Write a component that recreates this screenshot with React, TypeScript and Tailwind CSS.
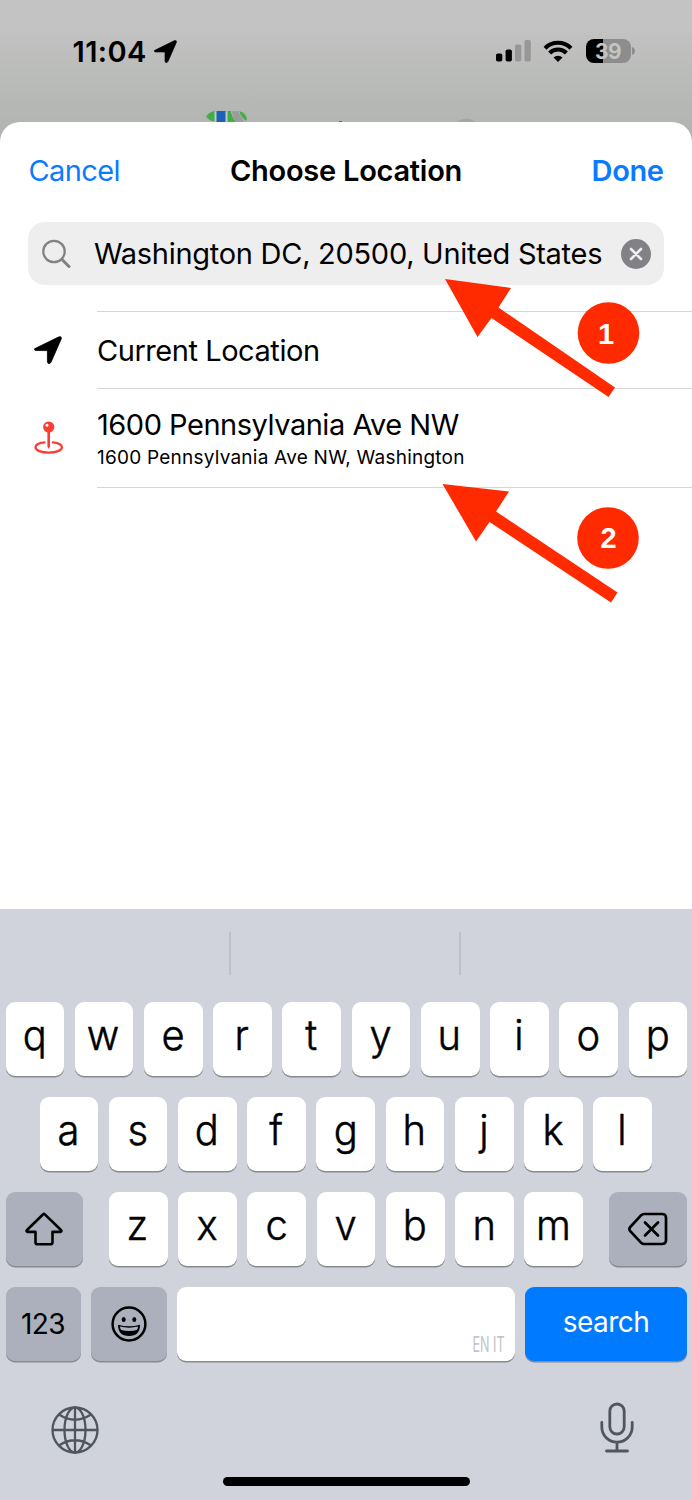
import clsx from "clsx";
import type { ReactNode } from "react";

const Navigation = ({ className }: { className: string }) => (
  <svg viewBox="0 0 28 28" className={className}>
    <path
      d="M1.500 12.300 24.500 1q3.500-1.200 2.700 2L17 26.200q-1.100 1.900-2.700 1.200-.9-.4-.9-2V15.600q0-1-1-1L2.300 14.500Q.5 14.400.2 13.400q0-.6 1.300-1.100Z"
      fill="#000"
      stroke="#000"
      strokeWidth="0.800"
      strokeLinejoin="round"
    />
  </svg>
);

const Key = ({
  children,
  dark,
  className = "w-[58.6px]",
}: {
  children?: ReactNode;
  dark?: boolean;
  className?: string;
}) => (
  <button
    className={clsx(
      "flex h-[74px] shrink-0 items-center justify-center rounded-[9px] shadow-[0_1.5px_0_#898a8d]",
      dark ? "bg-[#abb0bc]" : "bg-white",
      className,
    )}
  >
    {children}
  </button>
);

const Letter = ({ char }: { char: string }) => (
  <Key>
    <span className="-mt-[9px] -ml-px scale-x-95 text-[42px] leading-[50px] font-light [-webkit-text-stroke:0.5px_#000]">
      {char}
    </span>
  </Key>
);

const Letters = ({ chars }: { chars: string }) => (
  <div className="flex gap-[10.65px]">
    {chars.split("").map((char) => (
      <Letter key={char} char={char} />
    ))}
  </div>
);

const StatusBar = () => (
  <div className="flex h-[102px] items-center justify-between pr-[57px] pl-[72.5px]">
    <div className="flex items-center gap-[7px]">
      <span className="mt-0.5 text-[29px] leading-9 font-semibold tracking-[0.4px]">
        11:04
      </span>
      <Navigation className="size-[23px]" />
    </div>

    <div className="flex items-center">
      <svg viewBox="0 0 36 24" className="h-6 w-9">
        <rect x="0" y="14.5" width="6.3" height="8" rx="1.8" />
        <rect x="9.6" y="10.5" width="6.3" height="12" rx="1.8" />
        <rect x="19" y="5.5" width="6.3" height="17" rx="1.8" fill="#969796" />
        <rect x="28.5" y="1" width="6.3" height="21.5" rx="1.8" fill="#969796" />
      </svg>
      <svg viewBox="0 0 30 24" className="ml-[11px] h-6 w-[30px]" fill="none">
        <g stroke="#000" strokeWidth="4.1">
          <path d="M2 9.2a18.4 18.4 0 0 1 26 0" />
          <path d="M6.6 14a11.9 11.9 0 0 1 16.8 0" />
        </g>
        <path d="M10.5 18.5a6.4 6.4 0 0 1 9 0L15 23Z" fill="#000" />
      </svg>
      <div className="ml-[13px] flex h-6 w-[45px] items-center justify-center rounded-[8px] bg-[linear-gradient(90deg,#000_17.5px,#8c8d8c_17.5px)]">
        <span className="mt-px text-[21px] leading-6 font-bold tracking-[-0.5px] text-[#c3c4c3]">
          39
        </span>
      </div>
      <svg viewBox="0 0 3 8" className="ml-[1.5px] h-2 w-[3px]">
        <path d="M0 0c4 1.300 4 6.700 0 8Z" fill="#8c8d8c" />
      </svg>
    </div>
  </div>
);

// sliver of the screen that stays visible above the sheet
const Backdrop = () => (
  <svg viewBox="0 0 692 13" className="block h-[13px] w-full">
    <path d="M212 3h28v10h-28Z" fill="#c6c8c5" />
    <path d="M206 7.500Q209 3 214.500 2V13Q209 11.500 206 7.500Z" fill="#43ad49" />
    <path d="M216.500 2h9v12h-9Z" fill="#1d62b8" />
    <path d="M227.500 2h3.500q1 7 6 12h-9.500Z" fill="#43ad49" />
    <path d="M232 2h6q3 6 7 12h-8q-5-5-5-12Z" fill="#9b9d9a" />
    <path d="M239 2q7 2 8 8l-1 2q-5-4-7-10Z" fill="#43ad49" />
    <path d="M457 13q9-7 19 0Z" fill="#a3a5a2" />
    <path d="M339 12h3v1h-3Z" fill="#6b6c6a" />
  </svg>
);

const Pin = () => (
  <svg viewBox="0 0 30 34" className="h-[34px] w-[30px]" fill="none">
    <path
      d="M10.500 21.300C5 21.900 1.500 23.800 1.500 26.300c0 3.100 5.800 5.400 13.200 5.400s13.200-2.300 13.200-5.400c0-2.500-3.500-4.400-9-5"
      stroke="#fa3d35"
      strokeWidth="2.300"
      strokeLinecap="round"
    />
    <path d="M13.400 10h2.600v15.500l-1.300 2.500-1.300-2.500Z" fill="#fa3d35" />
    <circle cx="14.700" cy="6" r="5.600" fill="#fa3d35" />
    <circle cx="13" cy="4.300" r="1.500" fill="#fff" />
  </svg>
);

const Sheet = () => (
  <div className="h-[787px] rounded-t-[20px] bg-white">
    <div className="grid h-[100px] grid-cols-[1fr_auto_1fr] items-center px-[28.5px] pb-0.5 text-[29px] leading-9">
      <button className="justify-self-start tracking-[-0.6px] text-[#0a7aff]">
        Cancel
      </button>
      <span className="font-semibold tracking-[-0.25px]">Choose Location</span>
      <button className="justify-self-end font-semibold tracking-[-0.4px] text-[#0a7aff]">
        Done
      </button>
    </div>

    <div className="mx-7 flex h-[63px] items-center rounded-[17px] bg-[#eeeeef] pl-[13px]">
      <svg viewBox="0 0 30 30" className="size-[30px] shrink-0" fill="none">
        <circle cx="13" cy="12.500" r="10.700" stroke="#818285" strokeWidth="2.300" />
        <path
          d="m21 20.500 7 7"
          stroke="#818285"
          strokeWidth="3"
          strokeLinecap="round"
        />
      </svg>
      <span className="ml-[23px] w-[514px] text-[29px] leading-9 tracking-[-0.28px] whitespace-nowrap">
        Washington DC, 20500, United States
      </span>
      <svg viewBox="0 0 30 30" className="ml-[13px] size-[30px] shrink-0">
        <circle cx="15" cy="15" r="15" fill="#818186" />
        <path
          d="m10 10 10 10m0-10L10 20"
          stroke="#eee"
          strokeWidth="2.600"
          strokeLinecap="round"
        />
      </svg>
    </div>

    <div className="mt-[26px]">
      <div className="flex h-[77px] items-center">
        <div className="flex w-[97px] pt-px pl-[34px]">
          <Navigation className="size-7" />
        </div>
        <div className="flex h-full flex-1 items-center border-t border-[#d6d6d8] pt-0.5 text-[29px] leading-9 tracking-[-0.45px]">
          Current Location
        </div>
      </div>
      <div className="flex h-[100px] items-center">
        <div className="flex w-[97px] pl-[34px]">
          <Pin />
        </div>
        <div className="flex h-full flex-1 flex-col border-y border-[#d6d6d8] pt-[18px]">
          <span className="text-[29px] leading-9 tracking-[-0.48px]">
            1600 Pennsylvania Ave NW
          </span>
          <span className="mt-[3px] text-[19px] leading-6 tracking-[0.23px]">
            1600 Pennsylvania Ave NW, Washington
          </span>
        </div>
      </div>
    </div>
  </div>
);

const Keyboard = () => (
  <div className="flex h-[591px] flex-col bg-[#d0d3dc]">
    <div className="flex h-[93px] pt-[23px]">
      <div className="h-[43px] w-[230.500px] border-r-2 border-[#bcc0c9]" />
      <div className="h-[43px] w-[230.500px] border-r-2 border-[#bcc0c9]" />
    </div>

    <div className="flex flex-col gap-[21px] px-[5.500px]">
      <Letters chars="qwertyuiop" />
      <div className="pl-[34px]">
        <Letters chars="asdfghjkl" />
      </div>
      <div className="flex justify-between">
        <Key dark className="w-[77.500px]">
          <svg
            viewBox="0 0 38 34"
            className="h-[34px] w-[38px]"
            fill="none"
            stroke="#000"
            strokeWidth="2.600"
            strokeLinejoin="round"
          >
            <path d="M18.200 2.300q.8-.8 1.600 0L36 18q1.200 1.700-.8 1.900h-7.700v10.300q0 2.100-2.100 2.100H12.600q-2.100 0-2.100-2.100V19.900H2.800Q.8 19.700 2 18Z" />
          </svg>
        </Key>
        <Letters chars="zxcvbnm" />
        <Key dark className="w-[77.500px]">
          <svg
            viewBox="0 0 40 34"
            className="h-[34px] w-10"
            fill="none"
            stroke="#000"
            strokeWidth="2.700"
            strokeLinejoin="round"
            strokeLinecap="round"
          >
            <path d="M16 2h18q4 0 4 4v22q0 4-4 4H16q-1.500 0-2.800-1.200L2.500 19.300q-2.200-2.300 0-4.600L13.200 3.200Q14.500 2 16 2Z" />
            <path d="m17 10.500 13 13m0-13-13 13" />
          </svg>
        </Key>
      </div>
      <div className="flex">
        <Key dark className="w-[75px]">
          <span className="text-[28px] leading-9 tracking-[-0.6px]">123</span>
        </Key>
        <Key dark className="ml-[10.500px] w-[76px]">
          <svg viewBox="0 0 36 36" className="size-9" fill="none">
            <circle cx="18" cy="18" r="16.400" stroke="#000" strokeWidth="2.500" />
            <ellipse cx="12.700" cy="13.500" rx="2" ry="2.500" fill="#000" />
            <ellipse cx="23.300" cy="13.500" rx="2" ry="2.500" fill="#000" />
            <path
              d="M7 18.800q11 3 22 0Q29 30 18 30T7 18.800Z"
              fill="#000"
            />
            <path
              d="M8.900 20.600q9.100 2.100 18.200 0-.3 2.200-1.200 3.500-7.900 1.800-15.800 0-.9-1.300-1.200-3.500Z"
              fill="#abb0bc"
            />
          </svg>
        </Key>
        <Key className="ml-[10px] w-[337.500px] items-end! justify-end! pr-[10px] pb-1">
          <span className="-ml-8 origin-right scale-x-[0.6] text-[21px] leading-6 whitespace-nowrap text-[#c4c4c6]">
            EN IT
          </span>
        </Key>
        <Key className="ml-[10.500px] w-[162px] bg-[#007aff]!">
          <span className="-mt-1 text-[28px] leading-9 tracking-[-0.5px] text-white">
            search
          </span>
        </Key>
      </div>
    </div>

    <div className="mt-[41px] flex justify-between pr-[57px] pl-[51px]">
      <svg
        viewBox="0 0 48 48"
        className="mt-1 size-12"
        fill="none"
        stroke="#50555f"
        strokeWidth="2.300"
      >
        <circle cx="24" cy="24" r="22.500" />
        <ellipse cx="24" cy="24" rx="10.500" ry="22.500" />
        <path d="M24 1.500v45M1.500 24h45M8 8.500q16 10.500 32 0M8 39.500q16-10.500 32 0" />
      </svg>
      <svg
        viewBox="0 0 36 54"
        className="h-[54px] w-9"
        fill="none"
        stroke="#50555f"
        strokeWidth="2.800"
        strokeLinecap="round"
      >
        <rect x="10.800" y="2" width="14.400" height="30" rx="7.200" />
        <path d="M2.800 20.500V25a15.200 15.200 0 0 0 30.400 0v-4.500M18 40.500V49M7.500 49h21" />
      </svg>
    </div>

    <div className="mt-[21px] h-[9px] w-[247px] self-center rounded-full bg-black" />
  </div>
);

const Callouts = () => (
  <svg
    viewBox="0 0 692 1500"
    className="pointer-events-none absolute inset-0 h-[1500px] w-[692px]"
  >
    <g fill="#ff2a00">
      <path d="M445 279 511 288 498.500 307.500 615 387.500 608.500 397 491.500 318 477.500 337Z" />
      <path d="M442.500 484 509 491.500 496 511.500 617.500 592.500 611 602.500 489.500 522 476 541.500Z" />
      <circle cx="608.500" cy="333" r="30.800" />
      <circle cx="608" cy="538" r="30.800" />
    </g>
    <g
      fill="#fff"
      fontFamily="Liberation Sans, Arial, sans-serif"
      fontSize="29"
      fontWeight="700"
      textAnchor="middle"
    >
      <text x="606" y="344">1</text>
      <text x="608.500" y="548">2</text>
    </g>
  </svg>
);

export default function App() {
  return (
    <div className="relative h-[1500px] w-[692px] overflow-hidden bg-[linear-gradient(#c3c4c3_0px,#c1c2c1_30px,#b5b7b4_110px,#b0b2b0_140px)] font-['Inter','Liberation_Sans',sans-serif] text-black">
      <StatusBar />
      <div className="h-5 pt-[7px]">
        <Backdrop />
      </div>
      <Sheet />
      <Keyboard />
      <Callouts />
    </div>
  );
}
